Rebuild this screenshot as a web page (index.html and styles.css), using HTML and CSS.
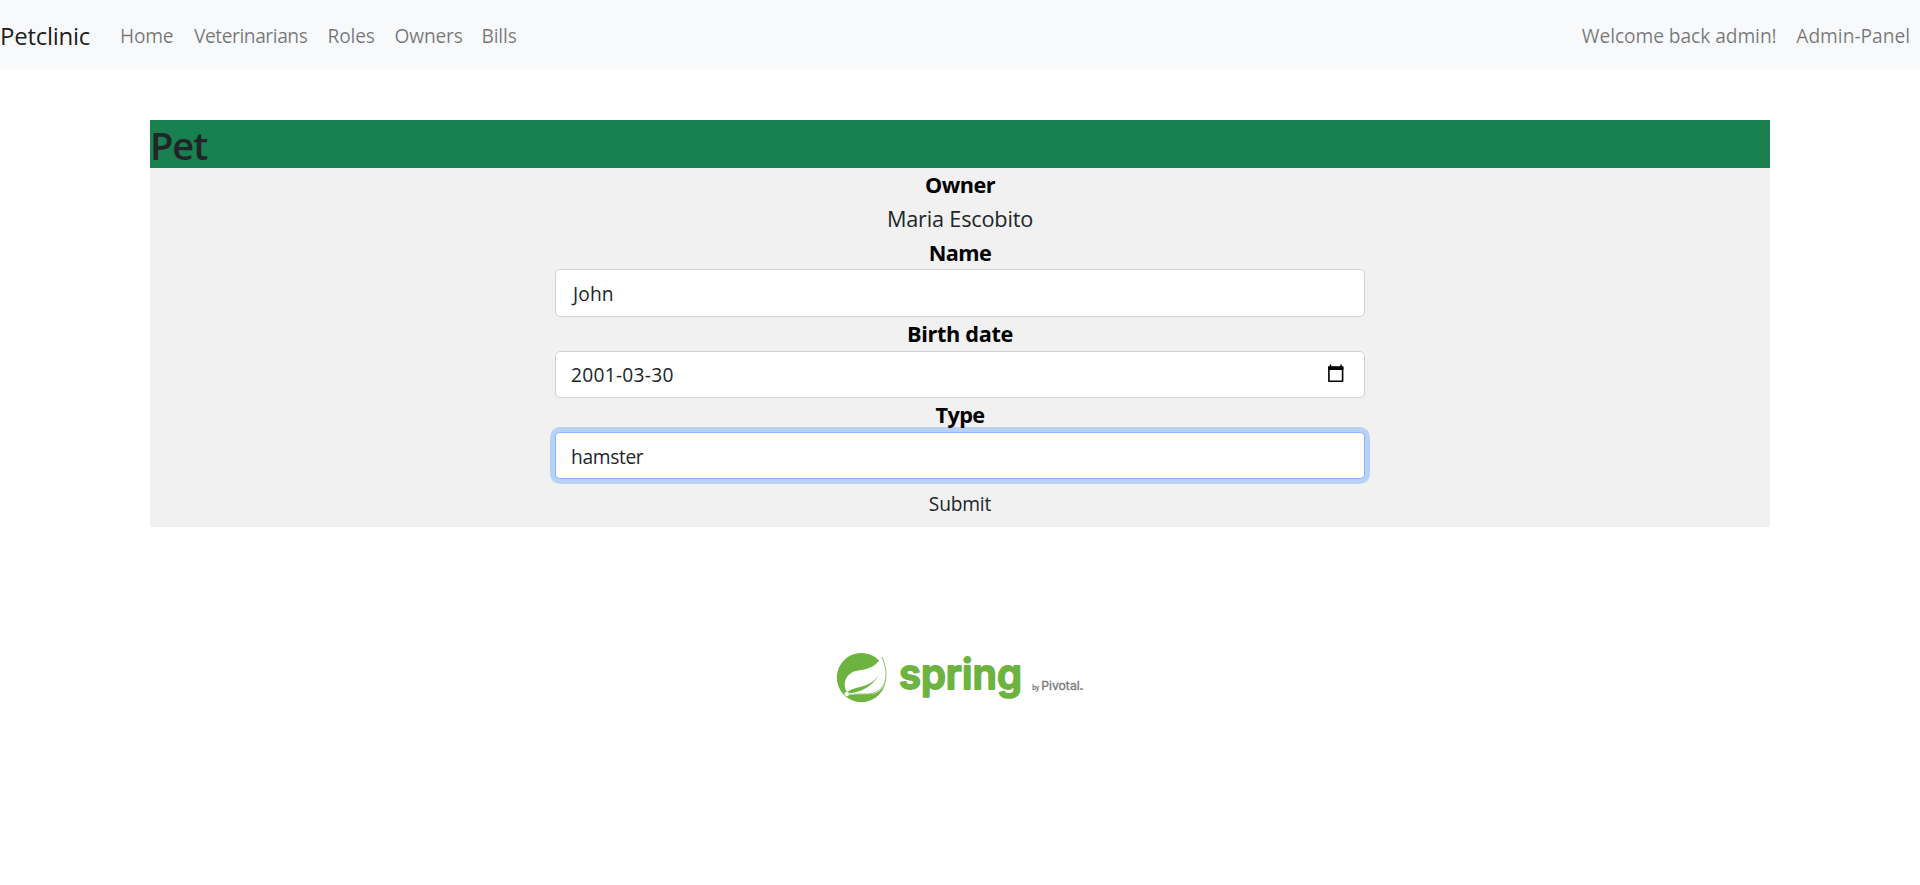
FILE: index.html
```html
<!DOCTYPE html>
<html lang="en">
<head>
<meta charset="utf-8">
<title>Petclinic</title>
<link rel="stylesheet" href="styles.css">
</head>
<body>
<nav class="navbar">
  <a class="brand">Petclinic</a>
  <div class="links">
    <a class="link home">Home</a>
    <a class="link vets">Veterinarians</a>
    <a class="link roles">Roles</a>
    <a class="link owners">Owners</a>
    <a class="link bills">Bills</a>
  </div>
  <div class="links account">
    <a class="link welcome">Welcome back admin!</a>
    <a class="link admin">Admin-Panel</a>
  </div>
</nav>
<main class="panel">
  <h2 class="title">Pet</h2>
  <form class="form">
    <div class="label">Owner</div>
    <div class="owner">Maria Escobito</div>
    <div class="label">Name</div>
    <div class="control name">John</div>
    <div class="label birth">Birth date</div>
    <div class="control date"><span>2001-03-30</span>
      <svg class="calendar" width="18" height="20" viewBox="0 0 18 20"><path d="M3.5 0.5V4M14 0.5V4" stroke="#000" stroke-width="1.5"/><path d="M1.9 3V17.2H15.6V3" fill="none" stroke="#000" stroke-width="1.6" stroke-linejoin="round"/><path d="M1.1 2.2H16.4V6H1.1Z"/></svg>
    </div>
    <div class="label raised">Type</div>
    <div class="control focused">hamster</div>
    <div class="submit">Submit</div>
  </form>
</main>
<footer class="footer">
  <svg class="logo" width="280" height="90" viewBox="0 0 280 90">
    <circle cx="41.4" cy="47.6" r="24.6" fill="#6db33f"/>
    <path d="M61.8 26.5C65 32 67.4 40 66.6 46C65.5 56 61 64.2 49 64.3L29 64.5L25.8 60C23.5 54 24.5 47 32 42.5C39 38.5 53 42.5 61.8 26.5Z" fill="#fff"/>
    <path d="M61.9 26.8C65 34 67 43 65.4 50C63 60.5 55 63.8 47 64L34 64.1" fill="none" stroke="#6db33f" stroke-width="1" opacity=".8"/>
    <path d="M31 63.2C43 61.5 54 54.5 58.8 44.8C54 53 46 55.8 38 57.6C33 58.8 29 60.3 27.2 62.6Z" fill="#6db33f"/>
    <circle cx="26.8" cy="64" r="2.5" fill="#fff" stroke="#6db33f" stroke-width=".5"/>
    <text class="wordmark" x="79" y="58.8" textLength="123" lengthAdjust="spacingAndGlyphs">spring</text>
    <text class="byline" x="212.2" y="60.2" font-size="7.2" textLength="7" lengthAdjust="spacingAndGlyphs">by</text>
    <text class="byline" x="221.2" y="60.2" font-size="11.3" textLength="38.5" lengthAdjust="spacingAndGlyphs">Pivotal</text>
    <rect x="260" y="58.2" width="3" height="1.8" fill="#999"/>
  </svg>
</footer>
</body>
</html>
```
FILE: styles.css
```css
* { box-sizing: border-box; }
body {
  margin: 0;
  background: #fff;
  color: #212529;
  font-family: "Open Sans", "Noto Sans", sans-serif;
  font-size: 19.2px;
  letter-spacing: -.2px;
}
.navbar {
  height: 70px;
  display: flex;
  align-items: center;
  background: #f8f9fb;
  white-space: nowrap;
}
.brand { width: 112px; font-size: 24px; letter-spacing: -.25px; color: rgba(0,0,0,.9); }
.links { display: flex; }
.link { padding-left: 8px; color: rgba(0,0,0,.53); }
.home { width: 74px; }
.vets { width: 133.5px; letter-spacing: -.45px; }
.roles { width: 67px; }
.owners { width: 87px; }
.account { margin-left: auto; padding-right: 10px; }
.welcome { width: 214.5px; letter-spacing: -.07px; }
.admin { letter-spacing: -.03px; }
.panel { margin: 50px 150px 0; }
.title {
  margin: 0;
  height: 48px;
  padding-top: 1px;
  background: #198050;
  font-size: 38px;
  line-height: 48px;
  font-weight: 600;
  letter-spacing: -1px;
}
.form {
  height: 359px;
  background: #f1f1f1;
  display: flex;
  flex-direction: column;
  align-items: center;
}
.form > * { flex-shrink: 0; }
.label, .owner { height: 33.75px; line-height: 33px; font-size: 21.7px; }
.label { font-weight: 700; color: #000; letter-spacing: -.55px; }
.birth { letter-spacing: -.35px; }
.owner { letter-spacing: -.2px; }
/* Keeps descenders above the focus ring of the next control */
.raised { position: relative; z-index: 1; }
.control {
  width: 810px;
  height: 47.5px;
  padding: 2px 15px 0;
  display: flex;
  align-items: center;
  background: #fff;
  border: 1px solid #ced4da;
  border-radius: 5px;
  line-height: 30px;
}
.name { padding-left: 17px; letter-spacing: .1px; }
.date { justify-content: space-between; padding-right: 19px; letter-spacing: .25px; }
.calendar { margin-top: -2px; }
.focused { border-color: #86b7fe; box-shadow: 0 0 0 5px #b8d1f4; letter-spacing: -.35px; }
.submit { height: 47.5px; line-height: 50px; }
.footer { height: 193px; padding-top: 103px; display: flex; justify-content: center; }
.logo { display: block; }
.wordmark {
  font: 600 41px Inter, sans-serif;
  letter-spacing: 0;
  fill: #6db33f;
  stroke: #6db33f;
  stroke-width: 1.8px;
  stroke-linejoin: round;
}
.byline { font-family: Inter, sans-serif; letter-spacing: 0; fill: #777; stroke: #777; stroke-width: .3px; }
```
